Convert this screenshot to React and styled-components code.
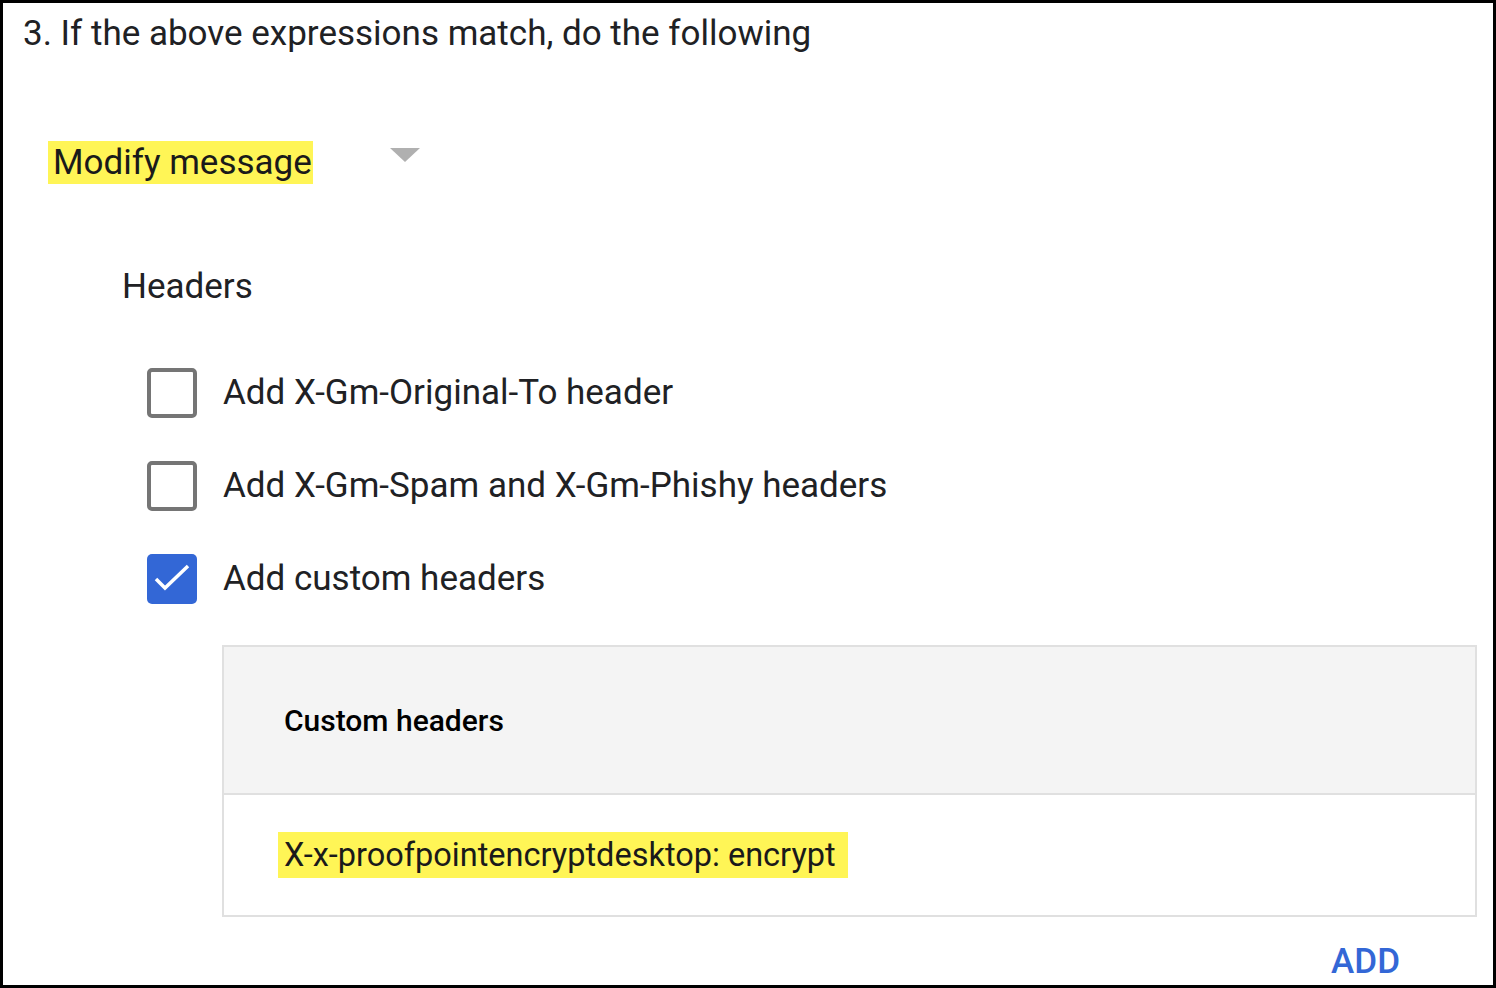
import React from 'react';
import styled, { createGlobalStyle } from 'styled-components';

const Global = createGlobalStyle`
  html, body { margin: 0; padding: 0; background: #fff; }
  body { font-family: Roboto, "Liberation Sans", sans-serif; color: #202124; }
`;

const Frame = styled.div`
  box-sizing: border-box;
  width: 1496px;
  height: 988px;
  border: 3px solid #000;
  padding: 11px 16px 0 20px;
  overflow: hidden;
`;

const Title = styled.div`
  font-size: 35px;
  line-height: 40px;
`;

const Select = styled.div`
  display: flex;
  align-items: center;
  width: 372px;
  margin: 87px 0 0 25px;
`;

const Highlight = styled.span`
  background: #fff556;
  font-size: ${p => p.size || 35}px;
  line-height: ${p => p.lh || 43}px;
  padding: 0 ${p => p.padR || 2}px 0 ${p => p.padL || 5}px;
  color: #1a1a1a;
`;

const Caret = styled.span`
  margin-left: auto;
  margin-top: -16px;
  width: 0;
  height: 0;
  border-left: 15px solid transparent;
  border-right: 15px solid transparent;
  border-top: 14px solid #b0b0b0;
`;

const Section = styled.div`
  margin: 83px 0 0 99px;
  font-size: 35px;
  line-height: 40px;
`;

const List = styled.div`
  display: flex;
  flex-direction: column;
  gap: 43px;
  margin: 61px 0 0 124px;
`;

const Row = styled.label`
  display: flex;
  align-items: center;
  gap: 26px;
  font-size: 35px;
  line-height: 50px;
`;

const Box = styled.span`
  box-sizing: border-box;
  flex: none;
  width: 50px;
  height: 50px;
  border-radius: 5px;
  border: ${p => (p.checked ? 'none' : '4px solid #757575')};
  background: ${p => (p.checked ? '#3367d6' : '#fff')};
  display: flex;
  align-items: center;
  justify-content: center;
`;

const Table = styled.div`
  margin: 41px 0 0 199px;
  border: 2px solid #e0e0e0;
`;

const HeadCell = styled.div`
  height: 146px;
  background: #f4f4f4;
  border-bottom: 2px solid #e0e0e0;
  display: flex;
  align-items: center;
  padding-left: 60px;
  font-size: 30px;
  font-weight: 500;
  color: #000;
`;

const BodyCell = styled.div`
  height: 120px;
  display: flex;
  align-items: center;
  padding-left: 54px;
`;

const Actions = styled.div`
  display: flex;
  justify-content: flex-end;
  padding: 25px 77px 0 0;
`;

const AddButton = styled.button`
  border: none;
  background: none;
  padding: 0;
  font-family: Roboto, "Liberation Sans", sans-serif;
  font-size: 35px;
  font-weight: 500;
  color: #3367d6;
  line-height: 40px;
`;

const Check = () => (
  <svg width="50" height="50" viewBox="0 0 50 50">
    <path d="M9 25 L18 34 L41 12" fill="none" stroke="#fff" strokeWidth="3.5" />
  </svg>
);

const options = [
  { label: 'Add X-Gm-Original-To header', checked: false },
  { label: 'Add X-Gm-Spam and X-Gm-Phishy headers', checked: false },
  { label: 'Add custom headers', checked: true },
];

export default function App() {
  return (
    <Frame>
      <Global />
      <Title>3. If the above expressions match, do the following</Title>
      <Select>
        <Highlight size={35} padL={5} padR={1}>Modify message</Highlight>
        <Caret />
      </Select>
      <Section>Headers</Section>
      <List>
        {options.map(o => (
          <Row key={o.label}>
            <Box checked={o.checked}>{o.checked && <Check />}</Box>
            {o.label}
          </Row>
        ))}
      </List>
      <Table>
        <HeadCell>Custom headers</HeadCell>
        <BodyCell>
          <Highlight size={32.5} lh={46} padL={6} padR={12}>X-x-proofpointencryptdesktop: encrypt</Highlight>
        </BodyCell>
      </Table>
      <Actions>
        <AddButton>ADD</AddButton>
      </Actions>
    </Frame>
  );
}
